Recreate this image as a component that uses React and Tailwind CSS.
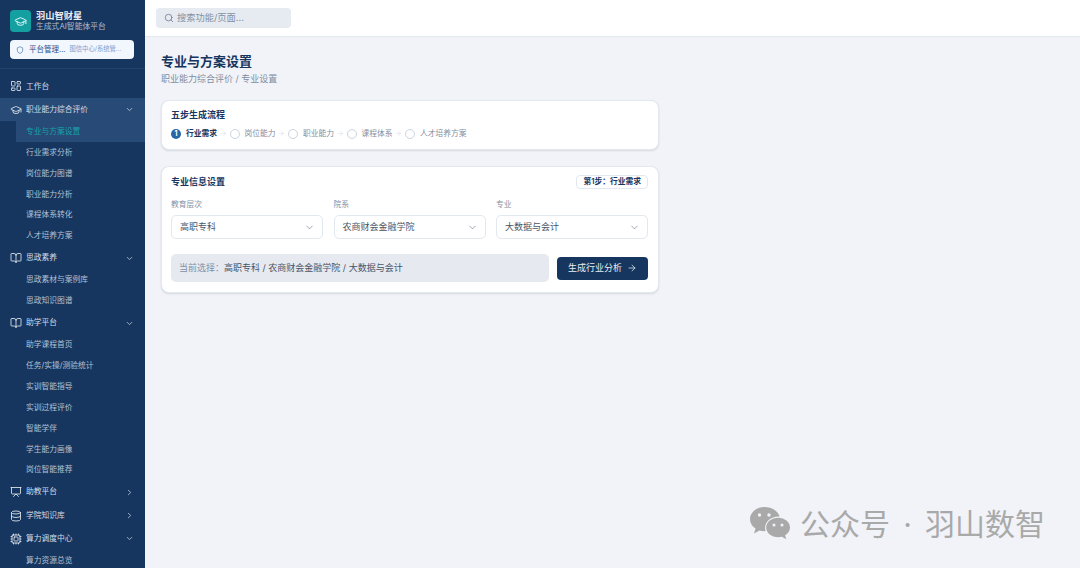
import React from "react";
import { LayoutDashboard, GraduationCap, ChevronDown, ChevronRight, BookOpen, Presentation, Database, Cpu, Shield, Search, ArrowRight } from "lucide-react";

const font = { fontFamily: '"Inter","Noto Sans CJK SC",sans-serif' };

function Main({ icon: Icon, label, open, chevron = true, active }) {
  return (
    <div className={`flex items-center h-[23.3px] pl-[10px] pr-[11px] text-[7.75px] text-[#d3dce8] ${active ? "bg-[#284a76]" : ""}`}>
      <Icon size={12} strokeWidth={1.7} className="text-[#e2e8f0] shrink-0" />
      <span className="ml-[4px] flex-1 whitespace-nowrap">{label}</span>
      {chevron && (open ? <ChevronDown size={9} strokeWidth={2} className="text-[#cbd5e1]" /> : <ChevronRight size={9} strokeWidth={2} className="text-[#cbd5e1]" />)}
    </div>
  );
}

function Sub({ label, active }) {
  return (
    <div className={`flex items-center h-[20.85px] ml-[16px] pl-[10px] text-[7.75px] whitespace-nowrap ${active ? "bg-[#284a76] text-[#14a3ab]" : "text-[#b4c1d3]"}`}>
      {label}
    </div>
  );
}

function Step({ n, label, active, last }) {
  return (
    <>
      {active ? (
        <span className="w-[10px] h-[10px] rounded-full bg-[#2a66a3] text-white text-[7px] font-bold flex items-center justify-center">{n}</span>
      ) : (
        <span className="w-[10px] h-[10px] rounded-full border border-[#cbd5e1] bg-white"></span>
      )}
      <span className={`ml-[5px] text-[7.75px] whitespace-nowrap ${active ? "text-[#16365f] font-semibold" : "text-[#7f8ea3]"}`}>{label}</span>
      {!last && <ArrowRight size={7} strokeWidth={1.5} className="text-[#cbd5e1] mx-[2.75px]" />}
    </>
  );
}

function Field({ label, value }) {
  return (
    <div className="flex-1 min-w-0">
      <div className="text-[7.75px] text-[#8291a6] leading-[10px] mb-[6px]">{label}</div>
      <div className="h-[24px] rounded-[5px] border border-[#e2e8f0] bg-white flex items-center justify-between pl-[8px] pr-[7px]">
        <span className="text-[9px] text-[#475569]">{value}</span>
        <ChevronDown size={11} strokeWidth={1.5} className="text-[#718096]" />
      </div>
    </div>
  );
}

function WeChat() {
  return (
    <svg width="42" height="36" viewBox="0 0 42 36" className="shrink-0">
      <path fill="#a9a9a9" d="M15.5 1C7.5 1 1 6.500 1 13.200c0 3.900 2.200 7.200 5.500 9.400L5 27.400l5.500-2.900c1.400.4 3 .7 4.600.7.5 0 1 0 1.500-.1-.3-1-.5-2-.5-3.100 0-6.300 5.900-11.400 13.300-11.400.4 0 .8 0 1.200.1C29.200 5.100 23 1 15.500 1z" />
      <path fill="#a9a9a9" d="M41 21.500c0-5.400-5.400-9.800-11.900-9.800s-11.900 4.400-11.900 9.800 5.400 9.800 11.900 9.800c1.300 0 2.600-.2 3.800-.5l4.400 2.500-1.200-4c2.900-1.800 4.900-4.600 4.900-7.800z" />
      <circle cx="10.500" cy="9" r="1.700" fill="#f1f3f8" />
      <circle cx="20" cy="9" r="1.700" fill="#f1f3f8" />
      <circle cx="25" cy="19" r="1.500" fill="#f1f3f8" />
      <circle cx="33" cy="19" r="1.500" fill="#f1f3f8" />
    </svg>
  );
}

export default function App() {
  return (
    <div style={font} className="relative flex w-[1080px] h-[568px] overflow-hidden bg-[#f1f3f8]">
      <aside className="w-[145px] h-full shrink-0 bg-[#16365f] overflow-hidden">
        <div className="h-[69px] border-b border-[#234369] px-[10px] pt-[10px]">
          <div className="flex items-center">
            <div className="w-[21px] h-[22px] rounded-[4px] bg-[#14a0a0] flex items-center justify-center">
              <GraduationCap size={13} strokeWidth={1.8} className="text-[#e6f6f6]" />
            </div>
            <div className="ml-[5px]">
              <div className="text-[9.25px] leading-[11px] font-bold text-[#e8edf4]">羽山智财星</div>
              <div className="text-[7.8px] leading-[11px] text-[#aebccd] whitespace-nowrap">生成式AI智能体平台</div>
            </div>
          </div>
          <div className="mt-[8px] h-[19px] w-[124px] rounded-[4px] bg-[#f2f6fd] flex items-center pl-[6px] overflow-hidden whitespace-nowrap">
            <Shield size={8} strokeWidth={1.8} className="text-[#2a66a3] shrink-0" />
            <span className="ml-[5px] text-[7.5px] text-[#1e4e8c]">平台管理...</span>
            <span className="ml-[4px] text-[6.3px] text-[#7c9cd0]">图信中心/系统管...</span>
          </div>
        </div>
        <div className="pt-[5.8px]">
          <Main icon={LayoutDashboard} label="工作台" chevron={false} />
          <Main icon={GraduationCap} label="职业能力综合评价" open active />
          <Sub label="专业与方案设置" active />
          <Sub label="行业需求分析" />
          <Sub label="岗位能力图谱" />
          <Sub label="职业能力分析" />
          <Sub label="课程体系转化" />
          <Sub label="人才培养方案" />
          <Main icon={BookOpen} label="思政素养" open />
          <Sub label="思政素材与案例库" />
          <Sub label="思政知识图谱" />
          <Main icon={BookOpen} label="助学平台" open />
          <Sub label="助学课程首页" />
          <Sub label="任务/实操/测验统计" />
          <Sub label="实训智能指导" />
          <Sub label="实训过程评价" />
          <Sub label="智能学伴" />
          <Sub label="学生能力画像" />
          <Sub label="岗位智能推荐" />
          <Main icon={Presentation} label="助教平台" />
          <Main icon={Database} label="学院知识库" />
          <Main icon={Cpu} label="算力调度中心" open />
          <Sub label="算力资源总览" />
        </div>
      </aside>
      <div className="flex-1 min-w-0 flex flex-col">
        <header className="h-[37px] bg-white border-b border-[#e2e8f0] flex items-center pl-[11px] shrink-0">
          <div className="w-[135px] h-[20px] rounded-[4px] bg-[#e6eaf1] flex items-center pl-[8px]">
            <Search size={10} strokeWidth={1.8} className="text-[#64748b]" />
            <span className="ml-[3px] text-[9.25px] text-[#8291a6]">搜索功能/页面...</span>
          </div>
        </header>
        <main className="pl-[16px] pt-[15px]">
          <h1 className="text-[13px] leading-[18px] font-bold text-[#16365f]">专业与方案设置</h1>
          <p className="text-[9px] leading-[12px] mt-[3px] text-[#7f8ea3]">职业能力综合评价 / 专业设置</p>
          <section className="mt-[15px] w-[498px] h-[50px] rounded-[8px] bg-white border border-[#e2e8f0] shadow-[0_1px_2px_rgba(15,23,42,0.12)] pl-[9px] pr-[10px] pt-[8px]">
            <div className="text-[9px] leading-[12px] font-bold text-[#16365f]">五步生成流程</div>
            <div className="flex items-center mt-[7px]">
              <Step n="1" label="行业需求" active />
              <Step label="岗位能力" />
              <Step label="职业能力" />
              <Step label="课程体系" />
              <Step label="人才培养方案" last />
            </div>
          </section>
          <section className="mt-[16px] w-[498px] h-[127px] rounded-[8px] bg-white border border-[#e2e8f0] shadow-[0_1px_2px_rgba(15,23,42,0.12)] pl-[9px] pr-[10px] pt-[7px]">
            <div className="flex items-center justify-between h-[15px]">
              <div className="text-[9px] font-bold text-[#16365f]">专业信息设置</div>
              <div className="h-[14px] px-[6px] rounded-[4px] border border-[#e2e8f0] flex items-center text-[7.75px] font-semibold text-[#16365f]">第1步：行业需求</div>
            </div>
            <div className="flex gap-[10.5px] mt-[10px]">
              <Field label="教育层次" value="高职专科" />
              <Field label="院系" value="农商财会金融学院" />
              <Field label="专业" value="大数据与会计" />
            </div>
            <div className="flex items-center gap-[8px] mt-[15px]">
              <div className="flex-1 h-[28px] rounded-[5px] bg-[#e6e9f0] flex items-center pl-[8px] text-[9px] text-[#8291a6]">
                当前选择：<span className="text-[#475569]">高职专科 / 农商财会金融学院 / 大数据与会计</span>
              </div>
              <button className="w-[91px] h-[23px] rounded-[4px] bg-[#16365f] text-[#e8edf4] flex items-center justify-center text-[9px]">
                生成行业分析
                <ArrowRight size={10} strokeWidth={1.8} className="ml-[5px]" />
              </button>
            </div>
          </section>
        </main>
      </div>
      <div className="absolute left-[749px] top-[505px] flex items-center">
        <WeChat />
        <span className="ml-[9px] text-[30px] leading-[38px] text-[#a9a9a9] whitespace-nowrap">公众号</span>
        <span className="w-[35px] text-center text-[30px] leading-[38px] text-[#a9a9a9]">·</span>
        <span className="text-[30px] leading-[38px] text-[#a9a9a9] whitespace-nowrap">羽山数智</span>
      </div>
    </div>
  );
}
